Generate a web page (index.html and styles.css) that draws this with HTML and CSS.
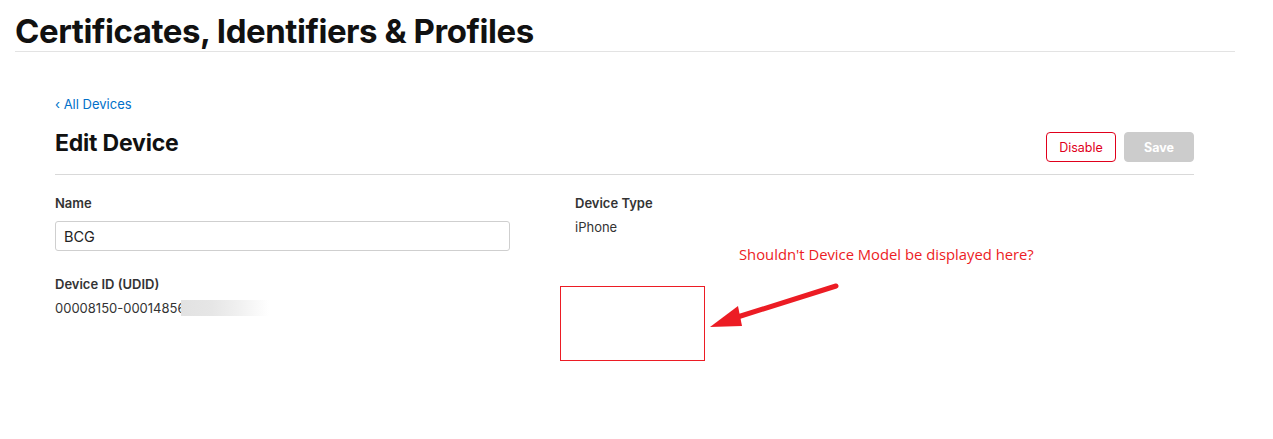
FILE: index.html
```html
<!DOCTYPE html>
<html>
<head>
<meta charset="utf-8">
<link rel="stylesheet" href="styles.css">
</head>
<body>
<header class="top">
  <h1 class="top-title">Certificates, Identifiers &amp; Profiles</h1>
</header>
<main class="page">
  <a class="back" href="#">‹ All Devices</a>
  <div class="head-row">
    <h2 class="page-title">Edit Device</h2>
    <div class="actions">
      <button class="btn btn-disable">Disable</button>
      <button class="btn btn-save">Save</button>
    </div>
  </div>
  <div class="form">
    <div class="col col-left">
      <div class="field">
        <div class="label">Name</div>
        <input class="input" type="text" value="BCG">
      </div>
      <div class="field field-udid">
        <div class="label">Device ID (UDID)</div>
        <div class="value udid"><span>00008150-0001485</span><span class="clip">6</span><span class="blur"></span></div>
      </div>
    </div>
    <div class="col col-right">
      <div class="field">
        <div class="label">Device Type</div>
        <div class="value">iPhone</div>
      </div>
    </div>
  </div>
</main>
<div class="note">Shouldn't Device Model be displayed here?</div>
<div class="note-box"></div>
<svg class="note-arrow" width="140" height="60" viewBox="0 0 140 60">
  <line x1="128" y1="6" x2="20" y2="40" stroke="#ec1c24" stroke-width="5" stroke-linecap="round"/>
  <polygon points="2,47 30,26 34,46" fill="#ec1c24"/>
</svg>
</body>
</html>
```
FILE: styles.css
```css
html, body {
  margin: 0;
  padding: 0;
  background: #fff;
}
body {
  font-family: Inter, "Liberation Sans", sans-serif;
  color: #111;
  position: relative;
  width: 1273px;
  height: 439px;
  overflow: hidden;
}
.top {
  width: 1220px;
  margin-left: 15px;
  border-bottom: 1px solid #e3e3e3;
  padding-top: 10px;
  height: 41px;
  box-sizing: content-box;
}
.top-title {
  margin: 0;
  font-size: 33px;
  font-weight: 700;
  letter-spacing: -0.45px;
  line-height: 42px;
  color: #111;
}
.page {
  padding: 0 79px 0 55px;
}
.back {
  display: block;
  margin-top: 44px;
  font-size: 13px;
  line-height: 16px;
  color: #0070c9;
  text-decoration: none;
}
.head-row {
  display: flex;
  justify-content: space-between;
  align-items: flex-start;
  border-bottom: 1px solid #d9d9d9;
  height: 50px;
  margin-top: 12px;
}
.page-title {
  margin: 5px 0 0;
  font-size: 23px;
  font-weight: 700;
  line-height: 28px;
  color: #111;
  letter-spacing: -0.2px;
}
.actions {
  display: flex;
  gap: 8px;
  margin-top: 8px;
}
.btn {
  width: 70px;
  height: 30px;
  border-radius: 4px;
  font-family: Inter, "Liberation Sans", sans-serif;
  font-size: 12.5px;
  box-sizing: border-box;
  padding: 0;
}
.btn-disable {
  background: #fff;
  border: 1px solid #e0001b;
  color: #e0001b;
}
.btn-save {
  background: #cccccc;
  border: 1px solid #cccccc;
  color: #fff;
  font-weight: 700;
}
.form {
  display: grid;
  grid-template-columns: 455px 1fr;
  column-gap: 65px;
  padding-top: 20px;
}
.field {
  display: flex;
  flex-direction: column;
}
.label {
  font-size: 13px;
  font-weight: 600;
  color: #333;
  line-height: 16px;
}
.input {
  margin-top: 10px;
  height: 30px;
  box-sizing: border-box;
  border: 1px solid #cfcfcf;
  border-radius: 3px;
  padding: 0 8px;
  font-family: Inter, "Liberation Sans", sans-serif;
  font-size: 14.5px;
  color: #222;
}
.field-udid {
  margin-top: 25px;
}
.value {
  font-size: 13px;
  color: #333;
  line-height: 16px;
  margin-top: 8px;
}
.udid {
  display: flex;
}
.clip {
  display: inline-block;
  width: 4px;
  overflow: hidden;
}
.blur {
  display: inline-block;
  width: 88px;
  height: 16px;
  background: linear-gradient(to right, #e2e2e2 0%, #e6e6e6 35%, #f0f0f0 65%, #fff 100%);
}
.note {
  position: absolute;
  left: 739px;
  top: 244px;
  font-family: "Open Sans", "Noto Sans", sans-serif;
  font-size: 14.8px;
  color: #ec1c24;
  line-height: 20px;
}
.note-box {
  position: absolute;
  left: 560px;
  top: 286px;
  width: 145px;
  height: 75px;
  box-sizing: border-box;
  border: 1px solid #ec1c24;
}
.note-arrow {
  position: absolute;
  left: 708px;
  top: 280px;
}
```
